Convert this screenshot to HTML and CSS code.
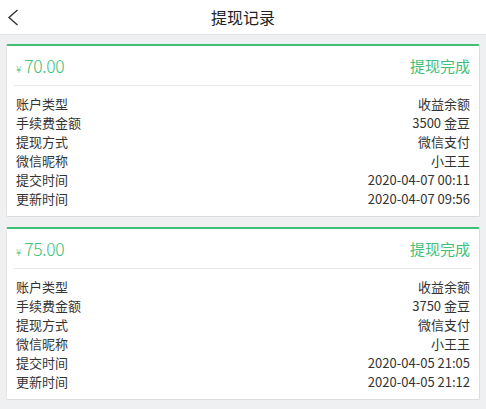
FILE: index.html
```html
<!DOCTYPE html>
<html lang="zh">
<head>
<meta charset="utf-8">
<link rel="stylesheet" href="styles.css">
</head>
<body>
<header class="topbar">
  <span class="back">
    <svg width="12" height="17" viewBox="0 0 12 17"><path d="M10.5 1 L2 8.5 L10.5 16" fill="none" stroke="#333" stroke-width="1.4"/></svg>
  </span>
  <h1 class="title">提现记录</h1>
</header>
<main class="list">
  <section class="card">
    <div class="card-head">
      <div class="amount"><span class="yen">¥</span>70.00</div>
      <div class="status">提现完成</div>
    </div>
    <div class="card-body">
      <div class="row"><span>账户类型</span><span>收益余额</span></div>
      <div class="row"><span>手续费金额</span><span>3500 金豆</span></div>
      <div class="row"><span>提现方式</span><span>微信支付</span></div>
      <div class="row"><span>微信昵称</span><span>小王王</span></div>
      <div class="row"><span>提交时间</span><span>2020-04-07 00:11</span></div>
      <div class="row"><span>更新时间</span><span>2020-04-07 09:56</span></div>
    </div>
  </section>
  <section class="card">
    <div class="card-head">
      <div class="amount"><span class="yen">¥</span>75.00</div>
      <div class="status">提现完成</div>
    </div>
    <div class="card-body">
      <div class="row"><span>账户类型</span><span>收益余额</span></div>
      <div class="row"><span>手续费金额</span><span>3750 金豆</span></div>
      <div class="row"><span>提现方式</span><span>微信支付</span></div>
      <div class="row"><span>微信昵称</span><span>小王王</span></div>
      <div class="row"><span>提交时间</span><span>2020-04-05 21:05</span></div>
      <div class="row"><span>更新时间</span><span>2020-04-05 21:12</span></div>
    </div>
  </section>
</main>
</body>
</html>
```
FILE: styles.css
```css
* { box-sizing: border-box; }
html, body { margin: 0; padding: 0; }
body {
  background: #eff0f2;
  font-family: "Noto Sans CJK SC", "Noto Sans", sans-serif;
  color: #333;
}
.topbar {
  height: 35px;
  background: #fff;
  border-bottom: 1px solid #e2e2e2;
  display: flex;
  align-items: center;
  justify-content: center;
  position: relative;
}
.back {
  position: absolute;
  left: 7px;
  top: 9px;
  display: flex;
}
.title {
  margin: 0;
  font-size: 16px;
  font-weight: normal;
  line-height: 34px;
  color: #222;
}
.list {
  padding: 9px 6px 0;
  display: flex;
  flex-direction: column;
  gap: 10px;
}
.card {
  background: #fff;
  border-top: 2px solid #41bf78;
  border-left: 1px solid #e4e4e4;
  border-right: 1px solid #dcdcdc;
  border-bottom: 1px solid #dcdcdc;
  border-radius: 2px;
  padding: 0 7px 8px;
}
.card-head {
  height: 40px;
  display: flex;
  align-items: center;
  justify-content: space-between;
  padding: 0 2px;
  border-bottom: 1px solid #e8e8e8;
  color: #41bf78;
}
.amount {
  font-size: 17.5px;
  font-weight: 300;
  letter-spacing: -0.4px;
  display: flex;
  align-items: baseline;
}
.yen {
  font-size: 10px;
  margin-right: 3px;
  letter-spacing: 0;
}
.status {
  font-size: 15px;
}
.card-body {
  padding: 8px 2px 0;
}
.row {
  display: flex;
  justify-content: space-between;
  font-size: 13px;
  line-height: 19px;
  height: 19px;
}
```
